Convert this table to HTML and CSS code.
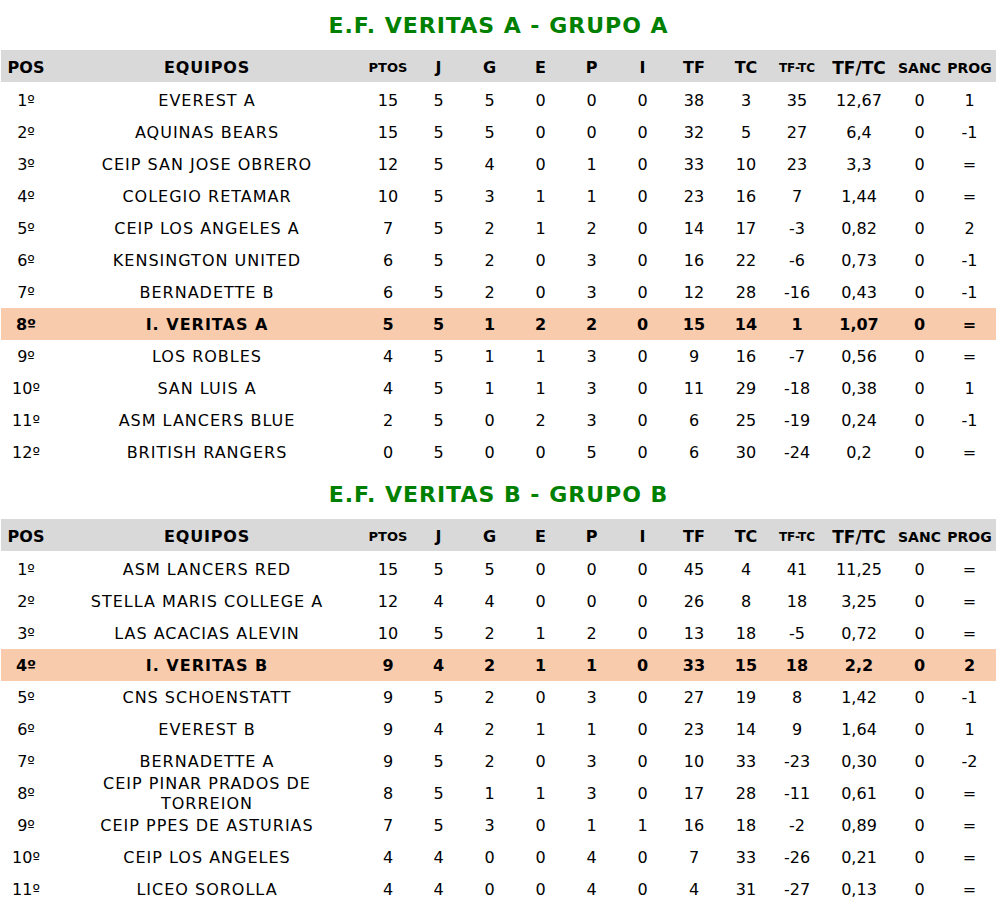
FILE: index.html
```html
<!DOCTYPE html>
<html lang="es">
<head>
<meta charset="utf-8">
<title>Clasificación</title>
<link rel="stylesheet" href="styles.css">
</head>
<body>
<div class="page">
  <section class="group">
    <h2 class="title">E.F. VERITAS A - GRUPO A</h2>
    <div class="table">
      <div class="row head">
        <div class="c">POS</div><div class="c team">EQUIPOS</div><div class="c sm">PTOS</div><div class="c">J</div><div class="c">G</div><div class="c">E</div><div class="c">P</div><div class="c">I</div><div class="c">TF</div><div class="c">TC</div><div class="c xs">TF-TC</div><div class="c lg">TF/TC</div><div class="c md">SANC</div><div class="c md">PROG</div>
      </div>
      <div class="row"><div class="c">1º</div><div class="c team">EVEREST A</div><div class="c">15</div><div class="c">5</div><div class="c">5</div><div class="c">0</div><div class="c">0</div><div class="c">0</div><div class="c">38</div><div class="c">3</div><div class="c">35</div><div class="c">12,67</div><div class="c">0</div><div class="c">1</div></div>
      <div class="row"><div class="c">2º</div><div class="c team">AQUINAS BEARS</div><div class="c">15</div><div class="c">5</div><div class="c">5</div><div class="c">0</div><div class="c">0</div><div class="c">0</div><div class="c">32</div><div class="c">5</div><div class="c">27</div><div class="c">6,4</div><div class="c">0</div><div class="c">-1</div></div>
      <div class="row"><div class="c">3º</div><div class="c team">CEIP SAN JOSE OBRERO</div><div class="c">12</div><div class="c">5</div><div class="c">4</div><div class="c">0</div><div class="c">1</div><div class="c">0</div><div class="c">33</div><div class="c">10</div><div class="c">23</div><div class="c">3,3</div><div class="c">0</div><div class="c">=</div></div>
      <div class="row"><div class="c">4º</div><div class="c team">COLEGIO RETAMAR</div><div class="c">10</div><div class="c">5</div><div class="c">3</div><div class="c">1</div><div class="c">1</div><div class="c">0</div><div class="c">23</div><div class="c">16</div><div class="c">7</div><div class="c">1,44</div><div class="c">0</div><div class="c">=</div></div>
      <div class="row"><div class="c">5º</div><div class="c team">CEIP LOS ANGELES A</div><div class="c">7</div><div class="c">5</div><div class="c">2</div><div class="c">1</div><div class="c">2</div><div class="c">0</div><div class="c">14</div><div class="c">17</div><div class="c">-3</div><div class="c">0,82</div><div class="c">0</div><div class="c">2</div></div>
      <div class="row"><div class="c">6º</div><div class="c team">KENSINGTON UNITED</div><div class="c">6</div><div class="c">5</div><div class="c">2</div><div class="c">0</div><div class="c">3</div><div class="c">0</div><div class="c">16</div><div class="c">22</div><div class="c">-6</div><div class="c">0,73</div><div class="c">0</div><div class="c">-1</div></div>
      <div class="row"><div class="c">7º</div><div class="c team">BERNADETTE B</div><div class="c">6</div><div class="c">5</div><div class="c">2</div><div class="c">0</div><div class="c">3</div><div class="c">0</div><div class="c">12</div><div class="c">28</div><div class="c">-16</div><div class="c">0,43</div><div class="c">0</div><div class="c">-1</div></div>
      <div class="row mine"><div class="c">8º</div><div class="c team">I. VERITAS A</div><div class="c">5</div><div class="c">5</div><div class="c">1</div><div class="c">2</div><div class="c">2</div><div class="c">0</div><div class="c">15</div><div class="c">14</div><div class="c">1</div><div class="c">1,07</div><div class="c">0</div><div class="c">=</div></div>
      <div class="row"><div class="c">9º</div><div class="c team">LOS ROBLES</div><div class="c">4</div><div class="c">5</div><div class="c">1</div><div class="c">1</div><div class="c">3</div><div class="c">0</div><div class="c">9</div><div class="c">16</div><div class="c">-7</div><div class="c">0,56</div><div class="c">0</div><div class="c">=</div></div>
      <div class="row"><div class="c">10º</div><div class="c team">SAN LUIS A</div><div class="c">4</div><div class="c">5</div><div class="c">1</div><div class="c">1</div><div class="c">3</div><div class="c">0</div><div class="c">11</div><div class="c">29</div><div class="c">-18</div><div class="c">0,38</div><div class="c">0</div><div class="c">1</div></div>
      <div class="row"><div class="c">11º</div><div class="c team">ASM LANCERS BLUE</div><div class="c">2</div><div class="c">5</div><div class="c">0</div><div class="c">2</div><div class="c">3</div><div class="c">0</div><div class="c">6</div><div class="c">25</div><div class="c">-19</div><div class="c">0,24</div><div class="c">0</div><div class="c">-1</div></div>
      <div class="row"><div class="c">12º</div><div class="c team">BRITISH RANGERS</div><div class="c">0</div><div class="c">5</div><div class="c">0</div><div class="c">0</div><div class="c">5</div><div class="c">0</div><div class="c">6</div><div class="c">30</div><div class="c">-24</div><div class="c">0,2</div><div class="c">0</div><div class="c">=</div></div>
    </div>
  </section>
  <section class="group second">
    <h2 class="title">E.F. VERITAS B - GRUPO B</h2>
    <div class="table">
      <div class="row head">
        <div class="c">POS</div><div class="c team">EQUIPOS</div><div class="c sm">PTOS</div><div class="c">J</div><div class="c">G</div><div class="c">E</div><div class="c">P</div><div class="c">I</div><div class="c">TF</div><div class="c">TC</div><div class="c xs">TF-TC</div><div class="c lg">TF/TC</div><div class="c md">SANC</div><div class="c md">PROG</div>
      </div>
      <div class="row"><div class="c">1º</div><div class="c team">ASM LANCERS RED</div><div class="c">15</div><div class="c">5</div><div class="c">5</div><div class="c">0</div><div class="c">0</div><div class="c">0</div><div class="c">45</div><div class="c">4</div><div class="c">41</div><div class="c">11,25</div><div class="c">0</div><div class="c">=</div></div>
      <div class="row"><div class="c">2º</div><div class="c team">STELLA MARIS COLLEGE A</div><div class="c">12</div><div class="c">4</div><div class="c">4</div><div class="c">0</div><div class="c">0</div><div class="c">0</div><div class="c">26</div><div class="c">8</div><div class="c">18</div><div class="c">3,25</div><div class="c">0</div><div class="c">=</div></div>
      <div class="row"><div class="c">3º</div><div class="c team">LAS ACACIAS ALEVIN</div><div class="c">10</div><div class="c">5</div><div class="c">2</div><div class="c">1</div><div class="c">2</div><div class="c">0</div><div class="c">13</div><div class="c">18</div><div class="c">-5</div><div class="c">0,72</div><div class="c">0</div><div class="c">=</div></div>
      <div class="row mine"><div class="c">4º</div><div class="c team">I. VERITAS B</div><div class="c">9</div><div class="c">4</div><div class="c">2</div><div class="c">1</div><div class="c">1</div><div class="c">0</div><div class="c">33</div><div class="c">15</div><div class="c">18</div><div class="c">2,2</div><div class="c">0</div><div class="c">2</div></div>
      <div class="row"><div class="c">5º</div><div class="c team">CNS SCHOENSTATT</div><div class="c">9</div><div class="c">5</div><div class="c">2</div><div class="c">0</div><div class="c">3</div><div class="c">0</div><div class="c">27</div><div class="c">19</div><div class="c">8</div><div class="c">1,42</div><div class="c">0</div><div class="c">-1</div></div>
      <div class="row"><div class="c">6º</div><div class="c team">EVEREST B</div><div class="c">9</div><div class="c">4</div><div class="c">2</div><div class="c">1</div><div class="c">1</div><div class="c">0</div><div class="c">23</div><div class="c">14</div><div class="c">9</div><div class="c">1,64</div><div class="c">0</div><div class="c">1</div></div>
      <div class="row"><div class="c">7º</div><div class="c team">BERNADETTE A</div><div class="c">9</div><div class="c">5</div><div class="c">2</div><div class="c">0</div><div class="c">3</div><div class="c">0</div><div class="c">10</div><div class="c">33</div><div class="c">-23</div><div class="c">0,30</div><div class="c">0</div><div class="c">-2</div></div>
      <div class="row"><div class="c">8º</div><div class="c team">CEIP PINAR PRADOS DE TORREJON</div><div class="c">8</div><div class="c">5</div><div class="c">1</div><div class="c">1</div><div class="c">3</div><div class="c">0</div><div class="c">17</div><div class="c">28</div><div class="c">-11</div><div class="c">0,61</div><div class="c">0</div><div class="c">=</div></div>
      <div class="row"><div class="c">9º</div><div class="c team">CEIP PPES DE ASTURIAS</div><div class="c">7</div><div class="c">5</div><div class="c">3</div><div class="c">0</div><div class="c">1</div><div class="c">1</div><div class="c">16</div><div class="c">18</div><div class="c">-2</div><div class="c">0,89</div><div class="c">0</div><div class="c">=</div></div>
      <div class="row"><div class="c">10º</div><div class="c team">CEIP LOS ANGELES</div><div class="c">4</div><div class="c">4</div><div class="c">0</div><div class="c">0</div><div class="c">4</div><div class="c">0</div><div class="c">7</div><div class="c">33</div><div class="c">-26</div><div class="c">0,21</div><div class="c">0</div><div class="c">=</div></div>
      <div class="row"><div class="c">11º</div><div class="c team">LICEO SOROLLA</div><div class="c">4</div><div class="c">4</div><div class="c">0</div><div class="c">0</div><div class="c">4</div><div class="c">0</div><div class="c">4</div><div class="c">31</div><div class="c">-27</div><div class="c">0,13</div><div class="c">0</div><div class="c">=</div></div>
    </div>
  </section>
</div>
</body>
</html>
```

FILE: styles.css
```css
html, body {
  margin: 0;
  padding: 0;
  background: #ffffff;
}

body {
  font-family: "DejaVu Sans", Verdana, sans-serif;
  color: #000000;
}

.page {
  padding: 0 1px;
}

.group.second {
  margin-top: 1px;
}

.title {
  margin: 0;
  height: 50px;
  display: flex;
  align-items: center;
  justify-content: center;
  font-size: 22px;
  font-weight: bold;
  letter-spacing: 1px;
  color: #008000;
}

.table {
  display: flex;
  flex-direction: column;
}

.row {
  display: grid;
  grid-template-columns: 50px 312px 50px 51px 51px 51px 51px 51px 52px 52px 50px 74px 47px 53px;
  height: 32px;
  font-size: 16px;
}

.row.head {
  background: #d9d9d9;
  font-weight: bold;
  margin-bottom: 2px;
}

.row.mine {
  background: #f8cbad;
  font-weight: bold;
}

.c {
  box-sizing: border-box;
  height: 32px;
  padding-top: 2px;
  display: flex;
  align-items: center;
  justify-content: center;
  text-align: center;
  line-height: 20px;
  overflow: hidden;
  white-space: nowrap;
}

.head .c {
  padding-top: 4px;
}

.c.team {
  white-space: normal;
  padding-left: 38px;
  padding-right: 38px;
  letter-spacing: 1px;
}

.head .c.team {
  letter-spacing: 0.8px;
}

.head .sm {
  font-size: 13px;
}

.head .xs {
  font-size: 12px;
}

.head .md {
  font-size: 14px;
}

.head .lg {
  font-size: 17px;
}
```
